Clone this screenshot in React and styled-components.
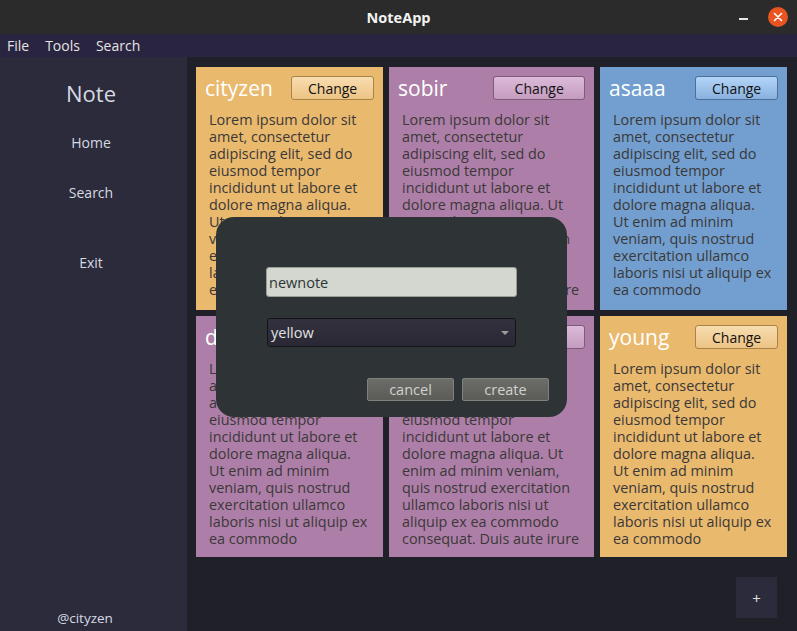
import React from 'react';
import styled, { createGlobalStyle } from 'styled-components';

const GlobalStyle = createGlobalStyle`
  html, body, #root {
    height: 100%;
  }
  body {
    margin: 0;
    background: #202029;
    font-family: "Open Sans", "Noto Sans", sans-serif;
    overflow: hidden;
  }
`;

// colours per note, taken from the tango palette the app uses
const palette = {
  yellow: { bg: '#e9b96e', top: '#f8ddb0', bottom: '#edc384', border: '#a8844a' },
  purple: { bg: '#ad7fa8', top: '#ddbad9', bottom: '#c49cc0', border: '#7d5b79' },
  blue: { bg: '#729fcf', top: '#b3d5f8', bottom: '#89b1de', border: '#4d6f98' },
};

const NARROW = [
  'Lorem ipsum dolor sit',
  'amet, consectetur',
  'adipiscing elit, sed do',
  'eiusmod tempor',
  'incididunt ut labore et',
  'dolore magna aliqua.',
  'Ut enim ad minim',
  'veniam, quis nostrud',
  'exercitation ullamco',
  'laboris nisi ut aliquip ex',
  'ea commodo',
];

const WIDE = [
  'Lorem ipsum dolor sit',
  'amet, consectetur',
  'adipiscing elit, sed do',
  'eiusmod tempor',
  'incididunt ut labore et',
  'dolore magna aliqua. Ut',
  'enim ad minim veniam,',
  'quis nostrud exercitation',
  'ullamco laboris nisi ut',
  'aliquip ex ea commodo',
  'consequat. Duis aute irure',
];

const notes = [
  { title: 'cityzen', color: 'yellow', lines: NARROW },
  { title: 'sobir', color: 'purple', lines: WIDE },
  { title: 'asaaa', color: 'blue', lines: NARROW },
  { title: 'dilshod', color: 'purple', lines: NARROW },
  { title: 'notes', color: 'purple', lines: WIDE },
  { title: 'young', color: 'yellow', lines: NARROW },
];

function App() {
  return (
    <>
      <GlobalStyle />
      <Window>
        <TitleBar>
          <span />
          <WindowTitle>NoteApp</WindowTitle>
          <Controls>
            <Minimize />
            <Close>
              <svg width="10" height="10" viewBox="0 0 10 10">
                <path d="M1.5 1.5 L8.5 8.5 M8.5 1.5 L1.5 8.5" stroke="#fff" strokeWidth="1.6" strokeLinecap="round" />
              </svg>
            </Close>
          </Controls>
        </TitleBar>

        <MenuBar>
          <MenuItem>File</MenuItem>
          <MenuItem>Tools</MenuItem>
          <MenuItem>Search</MenuItem>
        </MenuBar>

        <Body>
          <Sidebar>
            <Logo>Note</Logo>
            <NavItem $top={25}>Home</NavItem>
            <NavItem $top={30}>Search</NavItem>
            <NavItem $top={50}>Exit</NavItem>
            <User>@cityzen</User>
          </Sidebar>

          <Main>
            <Grid>
              {notes.map((n, i) => (
                <Card key={i} $color={n.color}>
                  <CardHeader>
                    <CardTitle>{n.title}</CardTitle>
                    <ChangeButton $color={n.color}>Change</ChangeButton>
                  </CardHeader>
                  <CardBody>
                    {n.lines.map((l, j) => (
                      <Line key={j}>{l}</Line>
                    ))}
                  </CardBody>
                </Card>
              ))}
            </Grid>
            <Footer>
              <AddButton>+</AddButton>
            </Footer>
          </Main>
        </Body>

        <Dialog>
          <NameInput defaultValue="newnote" />
          <ColorSelect>
            <span>yellow</span>
            <Arrow />
          </ColorSelect>
          <DialogActions>
            <DialogButton>cancel</DialogButton>
            <DialogButton>create</DialogButton>
          </DialogActions>
        </Dialog>
      </Window>
    </>
  );
}

const Window = styled.div`
  height: 100vh;
  display: flex;
  flex-direction: column;
`;

const TitleBar = styled.div`
  height: 34px;
  flex-shrink: 0;
  background: #2b2b2b;
  display: grid;
  grid-template-columns: 1fr auto 1fr;
  align-items: center;
  padding: 0 9px;
  box-sizing: border-box;
`;

const WindowTitle = styled.div`
  color: #f3f3f3;
  font-weight: 700;
  font-size: 14.5px;
`;

const Controls = styled.div`
  display: flex;
  justify-content: flex-end;
  align-items: center;
  gap: 20px;
`;

const Minimize = styled.div`
  width: 9px;
  height: 2px;
  margin-top: 4px;
  background: #e6e6e6;
`;

const Close = styled.div`
  width: 20px;
  height: 20px;
  border-radius: 50%;
  background: #e95420;
  display: flex;
  align-items: center;
  justify-content: center;
`;

const MenuBar = styled.div`
  height: 23px;
  flex-shrink: 0;
  background: #29243f;
  display: flex;
  align-items: center;
  gap: 16px;
  padding: 0 7px;
`;

const MenuItem = styled.div`
  color: #e4e4e4;
  font-size: 14px;
`;

const Body = styled.div`
  flex: 1;
  display: flex;
  min-height: 0;
`;

const Sidebar = styled.div`
  width: 187px;
  flex-shrink: 0;
  background: #2c2b3b;
  display: flex;
  flex-direction: column;
  align-items: center;
  padding: 21px 5px 3px 0;
  box-sizing: border-box;
`;

const Logo = styled.div`
  color: #d5dae2;
  font-size: 22px;
  line-height: 30px;
`;

const NavItem = styled.div`
  margin-top: ${(p) => p.$top}px;
  color: #d5dae2;
  font-size: 14px;
  line-height: 20px;
`;

const User = styled.div`
  margin-top: auto;
  margin-right: 12px;
  color: #d5dae2;
  font-size: 13.5px;
  line-height: 20px;
`;

const Main = styled.div`
  flex: 1;
  display: flex;
  flex-direction: column;
  padding: 10px 10px 0 9px;
`;

const Grid = styled.div`
  display: grid;
  grid-template-columns: 187px 205px 187px;
  grid-template-rows: 243px 241px;
  gap: 6px;
`;

const Card = styled.div`
  background: ${(p) => palette[p.$color].bg};
  padding: 9px 9px 0 9px;
  display: flex;
  flex-direction: column;
  overflow: hidden;
`;

const CardHeader = styled.div`
  display: flex;
  align-items: center;
  justify-content: space-between;
  height: 24px;
  flex-shrink: 0;
`;

const CardTitle = styled.div`
  color: #fff;
  font-size: 21px;
  line-height: 24px;
`;

const ChangeButton = styled.button`
  width: 49%;
  height: 24px;
  box-sizing: border-box;
  border: 1px solid ${(p) => palette[p.$color].border};
  border-radius: 3px;
  background: linear-gradient(${(p) => palette[p.$color].top}, ${(p) => palette[p.$color].bottom});
  font-family: inherit;
  font-size: 14px;
  color: #111;
  padding: 0;
`;

const CardBody = styled.div`
  margin-top: 11px;
  padding-left: 4px;
  height: 187px;
  overflow: hidden;
  color: #3b3838;
  font-size: 14.4px;
  line-height: 17px;
`;

const Line = styled.div`
  white-space: nowrap;
`;

const Footer = styled.div`
  display: flex;
  justify-content: flex-end;
  padding: 20px 10px 0 0;
`;

const AddButton = styled.div`
  width: 41px;
  height: 41px;
  background: #2c2b3b;
  color: #e0e0e0;
  font-size: 15px;
  display: flex;
  align-items: center;
  justify-content: center;
`;

const Dialog = styled.div`
  position: fixed;
  left: 216px;
  top: 217px;
  width: 351px;
  height: 200px;
  box-sizing: border-box;
  background: #2e3436;
  border-radius: 18px;
  padding: 50px 18px 16px 50px;
  display: flex;
  flex-direction: column;
`;

const NameInput = styled.input`
  width: 251px;
  height: 30px;
  box-sizing: border-box;
  background: #d3d7cf;
  border: 1px solid #9a9d96;
  border-radius: 3px;
  padding: 0 2px;
  font-family: inherit;
  font-size: 14.5px;
  color: #2e3436;
  outline: none;
`;

const ColorSelect = styled.div`
  margin-top: 21px;
  margin-left: 1px;
  width: 249px;
  height: 29px;
  box-sizing: border-box;
  background: linear-gradient(#34313f, #2a2834);
  border: 1px solid #141418;
  border-radius: 3px;
  padding: 0 6px 0 3px;
  display: flex;
  align-items: center;
  justify-content: space-between;
  color: #e2e2e2;
  font-size: 14.5px;
`;

const Arrow = styled.div`
  width: 0;
  height: 0;
  border-left: 4px solid transparent;
  border-right: 4px solid transparent;
  border-top: 4px solid #9c9c9c;
`;

const DialogActions = styled.div`
  margin-top: auto;
  display: flex;
  justify-content: flex-end;
  gap: 8px;
`;

const DialogButton = styled.button`
  width: 87px;
  height: 23px;
  box-sizing: border-box;
  background: linear-gradient(#6c6d69, #5b5c58);
  border: 1px solid #80817d;
  border-radius: 2px;
  color: #d2d2cc;
  font-family: inherit;
  font-size: 14.5px;
  padding: 0;
`;

export default App;
